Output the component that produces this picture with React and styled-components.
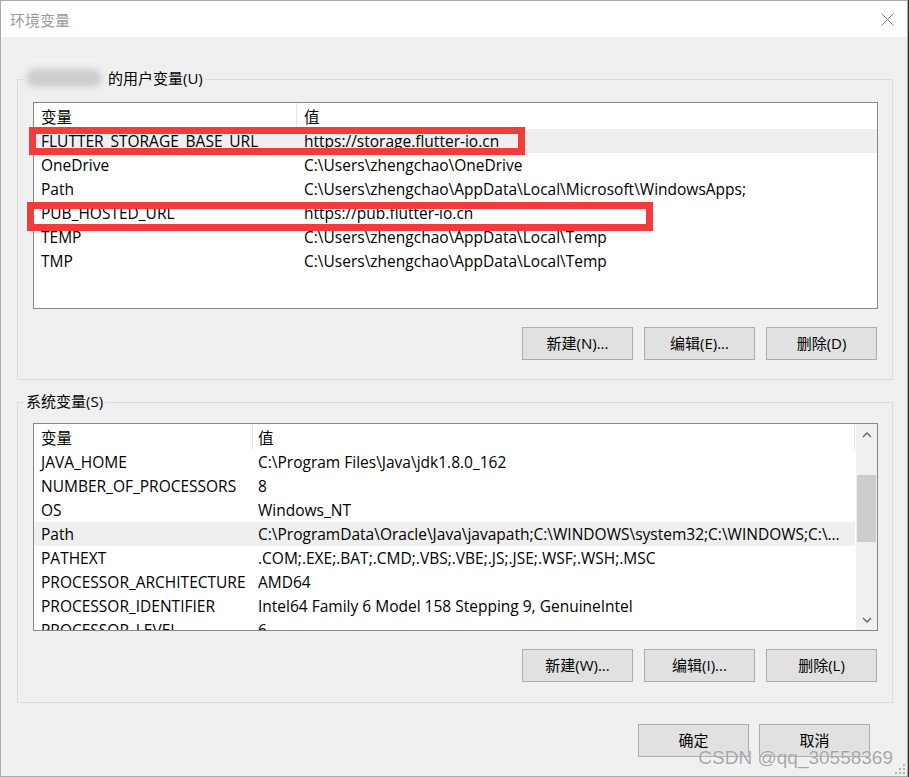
import React from 'react';
import styled, { createGlobalStyle } from 'styled-components';

const GlobalStyle = createGlobalStyle`
  html, body {
    margin: 0;
    padding: 0;
    background: #2f3136;
  }
`;

const Window = styled.div`
  position: relative;
  box-sizing: border-box;
  width: 908px;
  height: 777px;
  border: 1px solid #aaaaaa;
  background: #f0f0f0;
  display: flex;
  flex-direction: column;
  font-family: "Open Sans", "Noto Sans CJK SC", sans-serif;
  font-size: 15.5px;
  color: #000;
`;

const TitleBar = styled.div`
  flex: none;
  height: 36px;
  background: #fff;
  display: flex;
  align-items: center;
  justify-content: space-between;
  padding: 0 13px 0 9px;
`;

const Title = styled.span`
  font-size: 15px;
  color: #9a9a9a;
`;

const Close = styled.span`
  display: flex;
`;

const Content = styled.div`
  flex: 1;
  display: flex;
  flex-direction: column;
  padding: 32px 14px 0 16px;
`;

const Group = styled.fieldset`
  margin: ${(p) => p.$top}px 0 0 0;
  padding: ${(p) => p.$padTop}px 14px ${(p) => p.$padBottom}px 15px;
  border: 1px solid #dcdcdc;
  min-width: 0;
`;

const Legend = styled.legend`
  margin-left: -9px;
  padding: 0 2px 2px 2px;
  height: 18px;
  font-size: 15px;
  line-height: 18px;
  white-space: nowrap;
`;

const Blurred = styled.span`
  display: inline-block;
  width: 76px;
  height: 18px;
  margin-right: 6px;
  vertical-align: top;
  border-radius: 9px;
  background: #cdcdcd;
  filter: blur(3px);
`;

const ListBox = styled.div`
  position: relative;
  box-sizing: border-box;
  height: ${(p) => p.$h}px;
  border: 1px solid #828790;
  background: #fff;
  display: flex;
`;

const Table = styled.div`
  flex: 1;
  min-width: 0;
  overflow: hidden;
  display: flex;
  flex-direction: column;
`;

const HeaderRow = styled.div`
  flex: none;
  display: grid;
  grid-template-columns: ${(p) => p.$cols};
  height: 26px;
  line-height: 28px;
  border-right: ${(p) => (p.$endLine ? '1px solid #e5e5e5' : 'none')};
`;

const HeaderCell = styled.div`
  padding-left: ${(p) => p.$pad}px;
  border-left: ${(p) => (p.$divider ? '1px solid #e5e5e5' : 'none')};
  white-space: nowrap;
  overflow: hidden;
`;

const Row = styled.div`
  flex: none;
  display: grid;
  grid-template-columns: ${(p) => p.$cols};
  height: 24px;
  line-height: 24px;
  background: ${(p) => (p.$selected ? '#efefef' : 'transparent')};
`;

const Cell = styled.div`
  padding-left: ${(p) => p.$pad}px;
  padding-right: 4px;
  white-space: nowrap;
  overflow: hidden;
  text-overflow: ellipsis;
`;

const Scrollbar = styled.div`
  flex: none;
  width: 21px;
  margin-left: 1px;
  background: #f0f0f0;
  display: flex;
  flex-direction: column;
`;

const Arrow = styled.div`
  flex: none;
  height: 21px;
  display: flex;
  align-items: center;
  justify-content: center;
`;

const Track = styled.div`
  flex: 1;
`;

const Thumb = styled.div`
  margin: ${(p) => p.$offset}px 1px 0 1px;
  height: ${(p) => p.$size}px;
  background: #cdcdcd;
`;

const Mark = styled.div`
  position: absolute;
  box-sizing: border-box;
  left: ${(p) => p.$x}px;
  top: ${(p) => p.$y}px;
  width: ${(p) => p.$w}px;
  height: ${(p) => p.$h}px;
  border: 7px solid #f43b3b;
  pointer-events: none;
`;

const ButtonRow = styled.div`
  display: flex;
  justify-content: flex-end;
  gap: 11px;
  margin-top: 18px;
  padding-right: 1px;
`;

const Footer = styled.div`
  display: flex;
  justify-content: flex-end;
  gap: 10px;
  margin-top: 21px;
  padding-right: 23px;
`;

const Btn = styled.button`
  box-sizing: border-box;
  width: 111px;
  height: 33px;
  padding: 0 0 3px 0;
  border: 1px solid #adadad;
  background: #e1e1e1;
  font-family: inherit;
  font-size: 15px;
  color: #000;
`;

const Watermark = styled.div`
  position: absolute;
  right: 14px;
  bottom: 7px;
  font-family: "Liberation Sans", sans-serif;
  font-size: 19px;
  line-height: 22px;
  color: rgba(150, 150, 150, 0.85);
  text-shadow: 0 0 1px rgba(255, 255, 255, 0.9);
  pointer-events: none;
`;

const Grip = styled.div`
  position: absolute;
  right: 1px;
  bottom: 1px;
  display: flex;
`;

const userVars = [
  ['FLUTTER_STORAGE_BASE_URL', 'https://storage.flutter-io.cn', true],
  ['OneDrive', 'C:\\Users\\zhengchao\\OneDrive'],
  ['Path', 'C:\\Users\\zhengchao\\AppData\\Local\\Microsoft\\WindowsApps;'],
  ['PUB_HOSTED_URL', 'https://pub.flutter-io.cn'],
  ['TEMP', 'C:\\Users\\zhengchao\\AppData\\Local\\Temp'],
  ['TMP', 'C:\\Users\\zhengchao\\AppData\\Local\\Temp'],
];

const sysVars = [
  ['JAVA_HOME', 'C:\\Program Files\\Java\\jdk1.8.0_162'],
  ['NUMBER_OF_PROCESSORS', '8'],
  ['OS', 'Windows_NT'],
  ['Path', 'C:\\ProgramData\\Oracle\\Java\\javapath;C:\\WINDOWS\\system32;C:\\WINDOWS;C:\\WINDOWS\\System32\\Wbem;C:\\WINDOWS\\System32\\WindowsPowerShell\\v1.0\\', true],
  ['PATHEXT', '.COM;.EXE;.BAT;.CMD;.VBS;.VBE;.JS;.JSE;.WSF;.WSH;.MSC'],
  ['PROCESSOR_ARCHITECTURE', 'AMD64'],
  ['PROCESSOR_IDENTIFIER', 'Intel64 Family 6 Model 158 Stepping 9, GenuineIntel'],
  ['PROCESSOR_LEVEL', '6'],
  ['PROCESSOR_REVISION', '9e09'],
];

function VarTable({ rows, cols, valueHeadPad, valuePad, endLine }) {
  return (
    <Table>
      <HeaderRow $cols={cols} $endLine={endLine}>
        <HeaderCell $pad={7}>变量</HeaderCell>
        <HeaderCell $pad={valueHeadPad} $divider>值</HeaderCell>
      </HeaderRow>
      {rows.map(([name, value, selected]) => (
        <Row key={name} $cols={cols} $selected={selected}>
          <Cell $pad={7}>{name}</Cell>
          <Cell $pad={valuePad}>{value}</Cell>
        </Row>
      ))}
    </Table>
  );
}

const Chevron = ({ down }) => (
  <svg width="10" height="6" viewBox="0 0 10 6">
    <polyline
      points={down ? '1,1 5,5 9,1' : '1,5 5,1 9,5'}
      fill="none"
      stroke="#606060"
      strokeWidth="1.3"
    />
  </svg>
);

export default function App() {
  return (
    <>
      <GlobalStyle />
      <Window>
        <TitleBar>
          <Title>环境变量</Title>
          <Close>
            <svg width="13" height="13" viewBox="0 0 13 13">
              <path d="M0.5 0.5 L12.5 12.5 M12.5 0.5 L0.5 12.5" stroke="#7a7a7a" strokeWidth="1" />
            </svg>
          </Close>
        </TitleBar>

        <Content>
          <Group $top={0} $padTop={13} $padBottom={19}>
            <Legend>
              <Blurred />
              的用户变量(U)
            </Legend>
            <ListBox $h={207}>
              <VarTable rows={userVars} cols="262px 1fr" valueHeadPad={7} valuePad={8} />
              <Mark $x={-5} $y={24} $w={496} $h={28} />
              <Mark $x={-7} $y={99} $w={626} $h={29} />
            </ListBox>
            <ButtonRow>
              <Btn>新建(N)...</Btn>
              <Btn>编辑(E)...</Btn>
              <Btn>删除(D)</Btn>
            </ButtonRow>
          </Group>

          <Group $top={12} $padTop={11} $padBottom={20}>
            <Legend>系统变量(S)</Legend>
            <ListBox $h={208}>
              <VarTable rows={sysVars} cols="218px 1fr" valueHeadPad={5} valuePad={6} endLine />
              <Scrollbar>
                <Arrow><Chevron /></Arrow>
                <Track>
                  <Thumb $offset={30} $size={67} />
                </Track>
                <Arrow><Chevron down /></Arrow>
              </Scrollbar>
            </ListBox>
            <ButtonRow>
              <Btn>新建(W)...</Btn>
              <Btn>编辑(I)...</Btn>
              <Btn>删除(L)</Btn>
            </ButtonRow>
          </Group>

          <Footer>
            <Btn>确定</Btn>
            <Btn>取消</Btn>
          </Footer>
        </Content>

        <Watermark>CSDN @qq_30558369</Watermark>
        <Grip>
          <svg width="12" height="12" viewBox="0 0 12 12" fill="#b4b4b4">
            <rect x="9" y="1" width="2" height="2" />
            <rect x="5" y="5" width="2" height="2" />
            <rect x="9" y="5" width="2" height="2" />
            <rect x="1" y="9" width="2" height="2" />
            <rect x="5" y="9" width="2" height="2" />
            <rect x="9" y="9" width="2" height="2" />
          </svg>
        </Grip>
      </Window>
    </>
  );
}
